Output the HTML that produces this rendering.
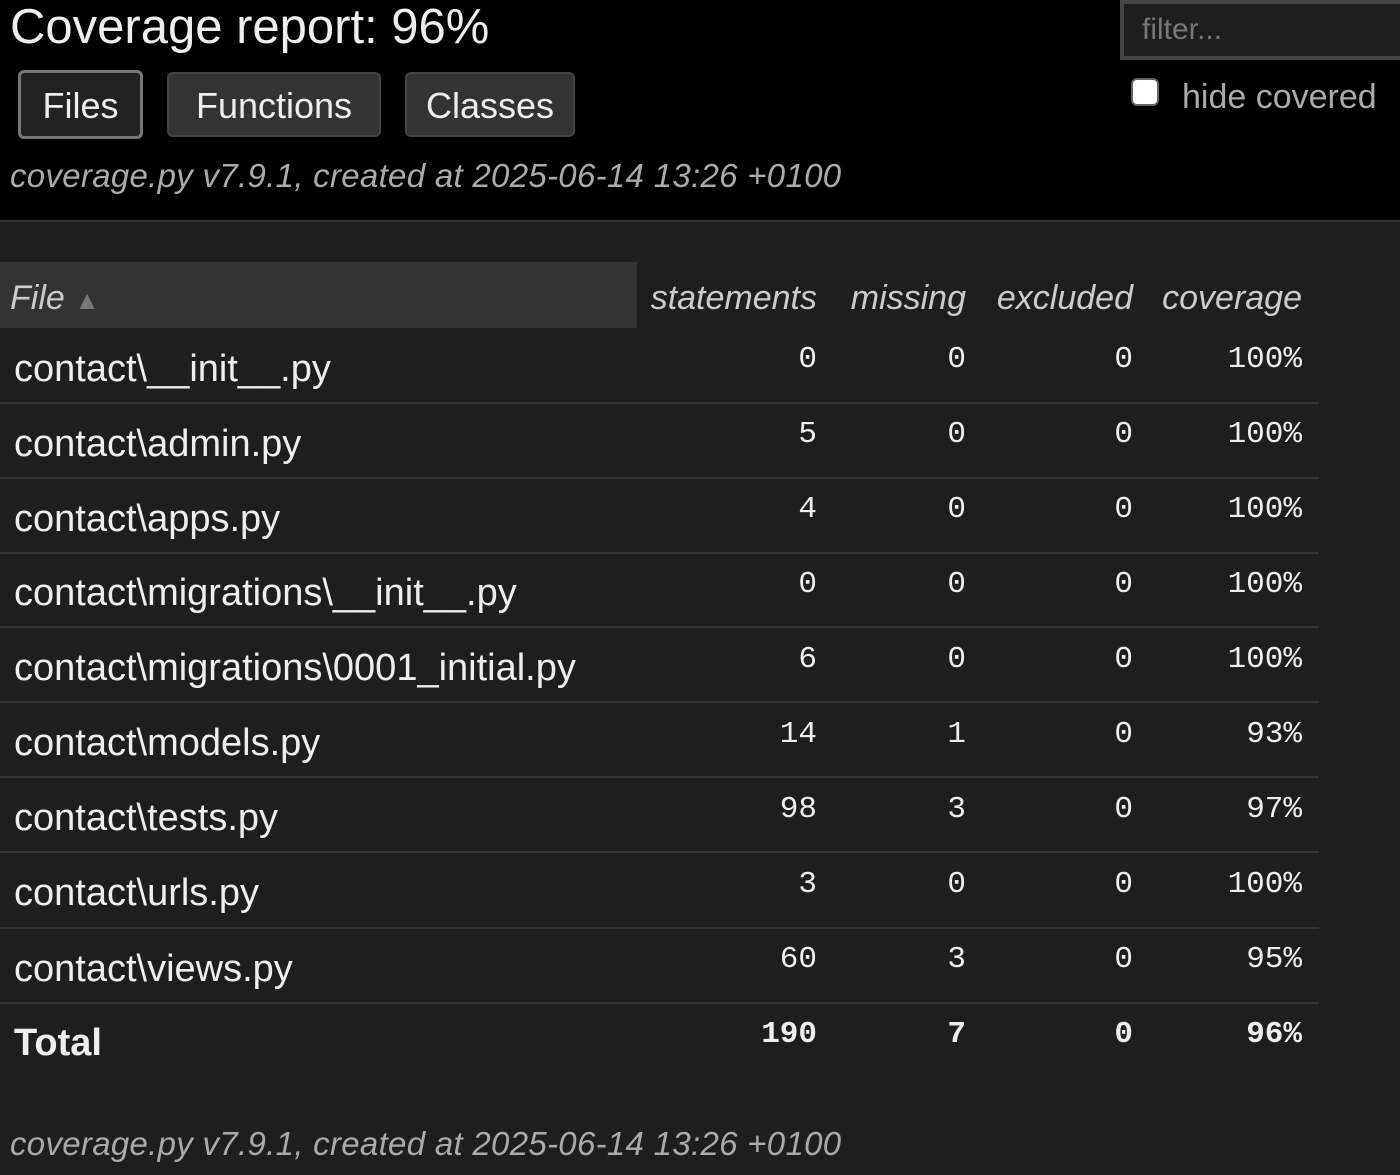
<!DOCTYPE html>
<html><head><meta charset="utf-8"><style>
body{margin:0;width:1400px;height:1175px;background:#1e1e1e;font-family:"Liberation Sans",sans-serif;color:#eee;position:relative;overflow:hidden}
.hdr{position:absolute;left:0;top:0;width:1400px;height:220px;background:#000;border-bottom:2px solid #333}
.a{position:absolute;white-space:nowrap}
.btn{position:absolute;box-sizing:border-box;border-radius:6px;background:#333;border:2px solid #444;color:#eee;font-size:36px;text-align:center}
.meta{font-style:italic;color:#aaa;font-size:33px;letter-spacing:0.3px}
.fn{font-size:38px;left:14px;color:#eee}
.num{font-family:"Liberation Mono",monospace;font-size:31px;text-align:right;color:#eee}
.num div{position:absolute;right:0}
.row{position:absolute;left:0;width:1319px;height:2px;background:#333}
.th{font-style:italic;font-size:34px;color:#ccc}
</style></head><body>
<div class="hdr"></div>
<div class="a" style="left:10px;top:-1px;font-size:49px;color:#eee">Coverage report: 96%</div>
<div class="btn" style="left:18px;top:70px;width:125px;height:69px;border:3px solid #777;background:#222;line-height:66px">Files</div>
<div class="btn" style="left:167px;top:72px;width:214px;height:65px;line-height:64px">Functions</div>
<div class="btn" style="left:405px;top:72px;width:170px;height:65px;line-height:64px">Classes</div>
<div class="a meta" style="left:10px;top:157px">coverage.py v7.9.1, created at 2025-06-14 13:26 +0100</div>
<div class="a" style="left:1120px;top:0;width:290px;height:60px;box-sizing:border-box;border:4px solid #444;background:#1e1e1e;color:#777;font-size:30px;padding:9px 0 0 18px">filter...</div>
<div class="a" style="left:1131px;top:78px;width:28px;height:28px;background:#fff;border:2px solid #666;border-radius:6px;box-sizing:border-box"></div>
<div class="a" style="left:1182px;top:78px;font-size:34px;color:#aaa">hide covered</div>

<div class="a" style="left:0;top:262px;width:637px;height:66px;background:#333"></div>
<div class="a th" style="left:10px;top:279px">File <span style="color:#777;font-style:normal;font-size:26px">▲</span></div>
<div class="a th" style="right:583px;top:279px">statements</div>
<div class="a th" style="right:434px;top:279px">missing</div>
<div class="a th" style="right:267px;top:279px">excluded</div>
<div class="a th" style="right:98px;top:279px">coverage</div>

<div class="row" style="top:402px"></div>
<div class="row" style="top:477px"></div>
<div class="row" style="top:552px"></div>
<div class="row" style="top:626px"></div>
<div class="row" style="top:701px"></div>
<div class="row" style="top:776px"></div>
<div class="row" style="top:851px"></div>
<div class="row" style="top:927px"></div>
<div class="row" style="top:1002px"></div>

<div class="a fn" style="top:348px">contact\__init__.py</div>
<div class="a fn" style="top:423px">contact\admin.py</div>
<div class="a fn" style="top:498px">contact\apps.py</div>
<div class="a fn" style="top:572px">contact\migrations\__init__.py</div>
<div class="a fn" style="top:647px">contact\migrations\0001_initial.py</div>
<div class="a fn" style="top:722px">contact\models.py</div>
<div class="a fn" style="top:797px">contact\tests.py</div>
<div class="a fn" style="top:872px">contact\urls.py</div>
<div class="a fn" style="top:948px">contact\views.py</div>
<div class="a fn" style="top:1022px;font-weight:bold">Total</div>

<div class="a num" style="right:583px;top:342px;width:200px;height:800px">
<div style="top:0">0</div><div style="top:75px">5</div><div style="top:150px">4</div><div style="top:225px">0</div><div style="top:300px">6</div><div style="top:375px">14</div><div style="top:450px">98</div><div style="top:525px">3</div><div style="top:600px">60</div><div style="top:675px;font-weight:bold">190</div>
</div>
<div class="a num" style="right:434px;top:342px;width:100px;height:800px">
<div style="top:0">0</div><div style="top:75px">0</div><div style="top:150px">0</div><div style="top:225px">0</div><div style="top:300px">0</div><div style="top:375px">1</div><div style="top:450px">3</div><div style="top:525px">0</div><div style="top:600px">3</div><div style="top:675px;font-weight:bold">7</div>
</div>
<div class="a num" style="right:267px;top:342px;width:100px;height:800px">
<div style="top:0">0</div><div style="top:75px">0</div><div style="top:150px">0</div><div style="top:225px">0</div><div style="top:300px">0</div><div style="top:375px">0</div><div style="top:450px">0</div><div style="top:525px">0</div><div style="top:600px">0</div><div style="top:675px;font-weight:bold">0</div>
</div>
<div class="a num" style="right:98px;top:342px;width:150px;height:800px">
<div style="top:0">100%</div><div style="top:75px">100%</div><div style="top:150px">100%</div><div style="top:225px">100%</div><div style="top:300px">100%</div><div style="top:375px">93%</div><div style="top:450px">97%</div><div style="top:525px">100%</div><div style="top:600px">95%</div><div style="top:675px;font-weight:bold">96%</div>
</div>

<div class="a meta" style="left:10px;top:1125px">coverage.py v7.9.1, created at 2025-06-14 13:26 +0100</div>
</body></html>
